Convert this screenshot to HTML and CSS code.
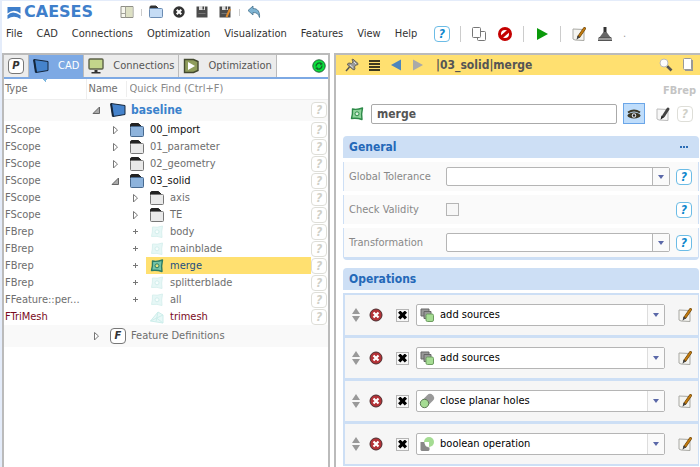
FILE: index.html
```html
<!DOCTYPE html>
<html lang="en">
<head>
    <meta charset="UTF-8">
    <meta name="viewport" content="width=device-width, initial-scale=1.0">
    <title>CAESES</title>
    <link rel="stylesheet" href="styles.css">
</head>
<body>
    <!-- icon sprite -->
    <svg class="sprite">
        <symbol id="i-layout" viewBox="0 0 16 16">
            <path d="M2 2.500h12v11H2z" fill="#f7f7ee" stroke="#8f8f86"/>
            <path d="M7 3h6.500v10H7z" fill="#dde0c4"/>
            <path d="M6.500 2.500v11M2 9.500h4.500" stroke="#a3a398" fill="none"/>
        </symbol>
        <symbol id="i-open" viewBox="0 0 16 16">
            <path d="M2 5V3q0-1 1-1h5l2 2" fill="#333" stroke="#333"/>
            <rect x="1.500" y="4.500" width="13" height="9" rx="1" fill="#c5dcf5" stroke="#6b8cb3"/>
        </symbol>
        <symbol id="i-close" viewBox="0 0 16 16">
            <circle cx="8" cy="8" r="5.700" fill="#333"/>
            <path d="M5.700 5.700l4.600 4.600M10.300 5.700l-4.600 4.600" stroke="#fff" stroke-width="2"/>
        </symbol>
        <symbol id="i-save" viewBox="0 0 16 16">
            <path d="M2.500 2.500h11v11h-11z" fill="#4c4c4c"/>
            <path d="M5 2h6v4H5z" fill="#ddd"/>
            <path d="M8.500 2.500h1.500v3H8.500z" fill="#444"/>
            <path d="M4.500 9h7v1h-7z" fill="#777"/>
        </symbol>
        <symbol id="i-undo" viewBox="0 0 16 16">
            <path d="M2 6.500L7 2v2.500c5 0 7 3.500 6.500 9C12.500 10 11 8.500 7 8.500V11z" fill="#7fb4d3" stroke="#44708c" stroke-width=".8"/>
        </symbol>
        <symbol id="i-copy" viewBox="0 0 16 16">
            <rect x="6.500" y="5.500" width="8" height="9" rx="1" fill="#fff" stroke="#777"/>
            <rect x="1.500" y="1.500" width="8" height="10" rx="1" fill="#fff" stroke="#777"/>
        </symbol>
        <symbol id="i-stop" viewBox="0 0 16 16">
            <circle cx="8" cy="8" r="5.500" fill="#fff" stroke="#c40000" stroke-width="3"/>
            <path d="M4 11.500L12 4.500" stroke="#c40000" stroke-width="3"/>
        </symbol>
        <symbol id="i-play" viewBox="0 0 16 16">
            <path d="M3 2l11 6-11 6z" fill="#0a9a0a"/>
        </symbol>
        <symbol id="i-edit" viewBox="0 0 16 16">
            <path d="M2 3l11 .5v11l-9-.5-2-1z" fill="#f4f4f0" stroke="#a9a9a4"/>
            <path d="M13.500 2.500L8 10.500" stroke="#5f3a00" stroke-width="3" stroke-linecap="round"/>
            <path d="M13.500 2.500L8.500 9.800" stroke="#c07a10" stroke-width="2" stroke-linecap="round"/>
            <path d="M6.500 9.500l2.500 1.800-3.500 2.500z" fill="#444"/>
        </symbol>
        <symbol id="i-note" viewBox="0 0 16 16">
            <path d="M2 3l11 .5v11l-9-.5-2-1z" fill="#f7f7f7" stroke="#bbb"/>
            <path d="M13 3L8.500 10" stroke="#444" stroke-width="3" stroke-linecap="round"/>
            <path d="M6.500 9.500l2.500 1.800-3.500 2.500z" fill="#222"/>
        </symbol>
        <symbol id="i-broom" viewBox="0 0 16 16">
            <path d="M6.500 1h3v7h-3z" fill="#333"/>
            <path d="M6.500 6h3l4.500 6H2z" fill="#666"/>
            <path d="M1 11.500h14v3H1z" fill="#999"/>
            <path d="M1 14.500h14M2 11.500h12" stroke="#555"/>
        </symbol>
        <symbol id="i-cad" viewBox="0 0 16 16">
            <path d="M1 1.500l14 2v9l-12 2z" fill="#4583cc" stroke="#14263c" stroke-linejoin="round"/>
            <path d="M1 1.500l2 13" stroke="#14263c" stroke-width="2"/>
        </symbol>
        <symbol id="i-monitor" viewBox="0 0 16 16">
            <rect x="1" y="1" width="14" height="10" rx="1" fill="#c3d68b" stroke="#5c6148" stroke-width="1.400"/>
            <path d="M6.500 12h3v2h-3zM3.500 14h9v1.500h-9z" fill="#333"/>
        </symbol>
        <symbol id="i-optim" viewBox="0 0 16 16">
            <path d="M1.500 1.500h9L15 3.500v9l-4.500 2h-9z" fill="#8f9d5c" stroke="#43492f" stroke-width="1.400"/>
            <path d="M5 4l7 4-7 4z" fill="#fff"/>
        </symbol>
        <symbol id="i-refresh" viewBox="0 0 16 16">
            <circle cx="8" cy="8" r="6.200" fill="#0ae03c" stroke="#24623a"/>
            <path d="M5 8.500c0-3 3-4.500 5-3M11 7.500c0 3-3 4.500-5 3" fill="none" stroke="#11662a" stroke-width="1.300"/>
            <path d="M9.500 4l2.500 2-3 1.500zM6.500 9l-2.500 1 3 2z" fill="#11662a"/>
        </symbol>
        <symbol id="i-folder" viewBox="0 0 16 16">
            <path d="M1.500 5V3q0-1.500 1.500-1.500h6.500L12 4" fill="#222" stroke="#222"/>
            <rect x="1.500" y="4.500" width="13" height="10" rx="1" fill="#e9e9e9" stroke="#777"/>
        </symbol>
        <symbol id="i-folder-blue" viewBox="0 0 16 16">
            <path d="M1.500 5V3q0-1.500 1.500-1.500h6.500L12 4" fill="#222" stroke="#222"/>
            <rect x="1.500" y="4.500" width="13" height="10" rx="1" fill="#8db3dc" stroke="#47698f"/>
        </symbol>
        <symbol id="i-right" viewBox="0 0 16 16">
            <path d="M6.500 4.500L10.500 8l-4 4z" fill="#fff" stroke="#777"/>
        </symbol>
        <symbol id="i-down" viewBox="0 0 16 16">
            <path d="M11.500 5v6.500H5z" fill="#aaa" stroke="#666"/>
        </symbol>
        <symbol id="i-plus" viewBox="0 0 16 16">
            <path d="M6 7.500h5M8.500 5v5" stroke="#777"/>
        </symbol>
        <symbol id="i-brep" viewBox="0 0 16 16">
            <path d="M3.500 3Q8 4 13.500 2Q12 8 13 13.500Q8 11.700 2.500 12.500Q3.800 8 3.500 3z" fill="#8ed49a" stroke="#2d8a48" stroke-width="1.400" stroke-linejoin="round"/>
            <circle cx="8" cy="7.800" r="2" fill="#d8f2da" stroke="#2d8a48"/>
        </symbol>
        <symbol id="i-brep-teal" viewBox="0 0 16 16">
            <path d="M3.500 3Q8 4 13.500 2Q12 8 13 13.500Q8 11.700 2.500 12.500Q3.800 8 3.500 3z" fill="#74c4a8" stroke="#2a7c66" stroke-width="1.400" stroke-linejoin="round"/>
            <circle cx="8" cy="7.800" r="2" fill="#e4e27c" stroke="#2a7c66"/>
        </symbol>
        <symbol id="i-brep-off" viewBox="0 0 16 16">
            <path d="M3.500 3Q8 4 13.500 2Q12 8 13 13.500Q8 11.700 2.500 12.500Q3.800 8 3.500 3z" fill="#e6f7f6" stroke="#d9f1ef" stroke-linejoin="round"/>
            <circle cx="8" cy="7.800" r="2" fill="#f6fdfc" stroke="#d3efed"/>
        </symbol>
        <symbol id="i-mesh" viewBox="0 0 16 16">
            <path d="M1.500 12L9 3l5 3v8zM1.500 12L14 6M9 3l-2 9.500M14 14L7.500 9" fill="#e8f8f7" stroke="#cdeeeb"/>
        </symbol>
        <symbol id="i-pin" viewBox="0 0 16 16">
            <path d="M8 2.500Q9 1.500 10 3l4 3.500q.5 1.500-1.500 1.500L10.500 9.500 11 12q-.5 1.500-2 .5L3.500 8Q3 6.500 5 6l2.500.5L9 5z" fill="#999" stroke="#6d6654"/>
            <path d="M5.500 10L2 14" stroke="#555" stroke-width="1.500"/>
            <path d="M6 8l3 2.500M10 5l2 2" stroke="#e4e4e4"/>
        </symbol>
        <symbol id="i-list" viewBox="0 0 16 16">
            <path d="M3 4h11M3 7h11M3 10h11M3 13h11" stroke="#3d3a20" stroke-width="2"/>
        </symbol>
        <symbol id="i-back" viewBox="0 0 16 16">
            <path d="M13 2.500v11L3 8z" fill="#4d86bd"/>
        </symbol>
        <symbol id="i-next" viewBox="0 0 16 16">
            <path d="M3 2.500v11L13 8z" fill="#a9a9a9"/>
        </symbol>
        <symbol id="i-search" viewBox="0 0 16 16">
            <path d="M9 9l4.500 4.500" stroke="#555" stroke-width="2.600"/>
            <circle cx="6" cy="6" r="4" fill="#fdfdfd" stroke="#bbb"/>
        </symbol>
        <symbol id="i-page" viewBox="0 0 16 16">
            <path d="M5 3h8v11H5z" fill="#999"/>
            <rect x="3.500" y="1.500" width="8" height="11" rx="1" fill="#fff" stroke="#999"/>
        </symbol>
        <symbol id="i-eye" viewBox="0 0 16 16">
            <path d="M2 6.500q6-4 12 0" fill="none" stroke="#3c3826" stroke-width="2"/>
            <ellipse cx="8" cy="9.500" rx="6.500" ry="3" fill="#3c3826"/>
            <circle cx="8" cy="9.500" r="2.200" fill="#e8eef4"/>
            <circle cx="8" cy="9.500" r="1.200" fill="#222"/>
        </symbol>
        <symbol id="i-sort" viewBox="0 0 16 16">
            <path d="M8 1l4 6H4zM8 15l4-6H4z" fill="#999"/>
        </symbol>
        <symbol id="i-delete" viewBox="0 0 16 16">
            <circle cx="8" cy="8" r="6" fill="#b33237" stroke="#4a2c2e"/>
            <path d="M5.500 5.500l5 5M10.500 5.500l-5 5" stroke="#fff" stroke-width="2.200"/>
        </symbol>
        <symbol id="i-add" viewBox="0 0 16 16">
            <path d="M2 2h8v7H2z" fill="#999" stroke="#666"/>
            <path d="M5 4.500h7v7H5z" fill="#999" stroke="#666"/>
            <rect x="7" y="7" width="7.500" height="7.500" rx="1.500" fill="#a5dc93" stroke="#6d9c60"/>
        </symbol>
        <symbol id="i-holes" viewBox="0 0 16 16">
            <path d="M6 10l5-5" stroke="#999" stroke-width="8" stroke-linecap="round"/>
            <circle cx="5.500" cy="10.500" r="4.200" fill="#a5dc93" stroke="#5d7a55"/>
        </symbol>
        <symbol id="i-bool" viewBox="0 0 16 16">
            <circle cx="10" cy="6" r="5" fill="#a5dc93"/>
            <path d="M1.500 6h4q0 5 5 5.500V14l-1 1h-7l-1-1z" fill="#888"/>
            <path d="M5.500 6H10v5q-4.500-.5-4.500-5z" fill="#fff"/>
        </symbol>
        <symbol id="i-caret" viewBox="0 0 16 16">
            <path d="M5 6h6l-3 4z" fill="#5a68a8"/>
        </symbol>
        <symbol id="i-dots" viewBox="0 0 16 16">
            <path d="M4 7h2v2H4zM7 7h2v2H7zM10 7h2v2h-2z" fill="#2b6cb5"/>
        </symbol>
    </svg>

    <header>
        <div class="toolbar">
            <a class="logo" href="#">
                <svg viewBox="0 0 14 14"><path d="M0 1h14v7Q7 2 0 8z" fill="#3f7fcb"/><path d="M0 10Q5 4 14 10v4Q7 9 0 14z" fill="#3f7fcb"/></svg>
                <span>CAESES</span>
            </a>
            <button class="icon" aria-label="Layout"><svg><use href="#i-layout"/></svg></button>
            <i class="sep"></i>
            <button class="icon" aria-label="Open"><svg><use href="#i-open"/></svg></button>
            <button class="icon" aria-label="Close"><svg><use href="#i-close"/></svg></button>
            <button class="icon" aria-label="Save"><svg><use href="#i-save"/></svg></button>
            <button class="icon" aria-label="Save as"><svg viewBox="0 0 16 16"><use href="#i-save"/><path d="M13 5L9.500 13" stroke="#e08a2c" stroke-width="2"/></svg></button>
            <i class="sep"></i>
            <button class="icon" aria-label="Undo"><svg><use href="#i-undo"/></svg></button>
        </div>
        <div class="menubar">
            <nav>
                <a href="#">File</a>
                <a href="#">CAD</a>
                <a href="#">Connections</a>
                <a href="#">Optimization</a>
                <a href="#">Visualization</a>
                <a href="#">Features</a>
                <a href="#">View</a>
                <a href="#">Help</a>
            </nav>
            <button class="help">?</button>
            <i class="sep"></i>
            <button class="icon" aria-label="Copy"><svg><use href="#i-copy"/></svg></button>
            <button class="icon" aria-label="Stop"><svg><use href="#i-stop"/></svg></button>
            <i class="sep"></i>
            <button class="icon" aria-label="Run"><svg><use href="#i-play"/></svg></button>
            <i class="sep"></i>
            <button class="icon" aria-label="Edit"><svg><use href="#i-edit"/></svg></button>
            <button class="icon" aria-label="Clean"><svg><use href="#i-broom"/></svg></button>
            <span class="more">.</span>
        </div>
    </header>

    <main>
        <!-- object tree -->
        <section class="panel left">
            <div class="tabs">
                <button class="tab"><span class="letter">P</span></button>
                <button class="tab active"><svg><use href="#i-cad"/></svg>CAD</button>
                <button class="tab"><svg><use href="#i-monitor"/></svg>Connections</button>
                <button class="tab"><svg><use href="#i-optim"/></svg>Optimization</button>
                <button class="icon refresh" aria-label="Refresh"><svg><use href="#i-refresh"/></svg></button>
            </div>
            <table class="tree">
                <colgroup>
                    <col class="col-type">
                    <col>
                    <col class="col-help">
                </colgroup>
                <thead>
                    <tr>
                        <th class="type">Type</th>
                        <th colspan="2"><div class="find"><label for="find">Name</label><input id="find" type="text" placeholder="Quick Find (Ctrl+F)"></div></th>
                    </tr>
                </thead>
                <tbody>
                    <tr class="root">
                        <td></td>
                        <td><div class="node"><svg><use href="#i-down"/></svg><span class="item"><svg><use href="#i-cad"/></svg><b>baseline</b></span></div></td>
                        <td><button class="help off">?</button></td>
                    </tr>
                    <tr class="dark">
                        <td>FScope</td>
                        <td><div class="node l1"><svg><use href="#i-right"/></svg><span class="item"><svg><use href="#i-folder-blue"/></svg>00_import</span></div></td>
                        <td><button class="help off">?</button></td>
                    </tr>
                    <tr>
                        <td>FScope</td>
                        <td><div class="node l1"><svg><use href="#i-right"/></svg><span class="item"><svg><use href="#i-folder"/></svg>01_parameter</span></div></td>
                        <td><button class="help off">?</button></td>
                    </tr>
                    <tr>
                        <td>FScope</td>
                        <td><div class="node l1"><svg><use href="#i-right"/></svg><span class="item"><svg><use href="#i-folder"/></svg>02_geometry</span></div></td>
                        <td><button class="help off">?</button></td>
                    </tr>
                    <tr class="dark">
                        <td>FScope</td>
                        <td><div class="node l1"><svg><use href="#i-down"/></svg><span class="item"><svg><use href="#i-folder-blue"/></svg>03_solid</span></div></td>
                        <td><button class="help off">?</button></td>
                    </tr>
                    <tr>
                        <td>FScope</td>
                        <td><div class="node l2"><svg><use href="#i-right"/></svg><span class="item"><svg><use href="#i-folder"/></svg>axis</span></div></td>
                        <td><button class="help off">?</button></td>
                    </tr>
                    <tr>
                        <td>FScope</td>
                        <td><div class="node l2"><svg><use href="#i-right"/></svg><span class="item"><svg><use href="#i-folder"/></svg>TE</span></div></td>
                        <td><button class="help off">?</button></td>
                    </tr>
                    <tr>
                        <td>FBrep</td>
                        <td><div class="node l2"><svg><use href="#i-plus"/></svg><span class="item"><svg><use href="#i-brep-off"/></svg>body</span></div></td>
                        <td><button class="help off">?</button></td>
                    </tr>
                    <tr>
                        <td>FBrep</td>
                        <td><div class="node l2"><svg><use href="#i-plus"/></svg><span class="item"><svg><use href="#i-brep-off"/></svg>mainblade</span></div></td>
                        <td><button class="help off">?</button></td>
                    </tr>
                    <tr class="selected">
                        <td>FBrep</td>
                        <td><div class="node l2"><svg><use href="#i-plus"/></svg><span class="item"><svg><use href="#i-brep-teal"/></svg>merge</span></div></td>
                        <td><button class="help off">?</button></td>
                    </tr>
                    <tr>
                        <td>FBrep</td>
                        <td><div class="node l2"><svg><use href="#i-plus"/></svg><span class="item"><svg><use href="#i-brep-off"/></svg>splitterblade</span></div></td>
                        <td><button class="help off">?</button></td>
                    </tr>
                    <tr>
                        <td>FFeature::per...</td>
                        <td><div class="node l2"><svg><use href="#i-plus"/></svg><span class="item"><svg><use href="#i-brep-off"/></svg>all</span></div></td>
                        <td><button class="help off">?</button></td>
                    </tr>
                    <tr class="error">
                        <td>FTriMesh</td>
                        <td><div class="node l2"><svg></svg><span class="item"><svg><use href="#i-mesh"/></svg>trimesh</span></div></td>
                        <td><button class="help off">?</button></td>
                    </tr>
                    <tr class="root">
                        <td></td>
                        <td colspan="2"><div class="node"><svg><use href="#i-right"/></svg><span class="item"><span class="letter">F</span>Feature Definitions</span></div></td>
                    </tr>
                </tbody>
            </table>
        </section>

        <!-- object editor -->
        <section class="panel right">
            <div class="crumbs">
                <button class="icon" aria-label="Pin"><svg><use href="#i-pin"/></svg></button>
                <button class="icon" aria-label="List"><svg><use href="#i-list"/></svg></button>
                <button class="icon" aria-label="Back"><svg><use href="#i-back"/></svg></button>
                <button class="icon" aria-label="Forward"><svg><use href="#i-next"/></svg></button>
                <b>|03_solid|merge</b>
                <button class="icon" aria-label="Search"><svg><use href="#i-search"/></svg></button>
                <button class="icon" aria-label="Duplicate"><svg><use href="#i-page"/></svg></button>
            </div>
            <div class="class-name">FBrep</div>
            <div class="name-row">
                <svg><use href="#i-brep"/></svg>
                <input type="text" value="merge" aria-label="Name">
                <button class="eye" aria-label="Visible"><svg><use href="#i-eye"/></svg></button>
                <button class="icon" aria-label="Note"><svg><use href="#i-note"/></svg></button>
                <button class="help off">?</button>
            </div>

            <div class="group">
                <h2>General<button class="icon" aria-label="More"><svg><use href="#i-dots"/></svg></button></h2>
                <div class="fields">
                    <div class="field">
                        <label for="tol">Global Tolerance</label>
                        <div class="combo"><select id="tol"><option></option></select><span class="arrow"><svg><use href="#i-caret"/></svg></span></div>
                        <button class="help">?</button>
                    </div>
                    <div class="field">
                        <label for="valid">Check Validity</label>
                        <div class="fill"><input id="valid" type="checkbox"></div>
                        <button class="help">?</button>
                    </div>
                    <div class="field">
                        <label for="trans">Transformation</label>
                        <div class="combo"><select id="trans"><option></option></select><span class="arrow"><svg><use href="#i-caret"/></svg></span></div>
                        <button class="help">?</button>
                    </div>
                </div>
            </div>

            <div class="group">
                <h2>Operations</h2>
                <div class="ops">
                    <div class="op">
                        <button class="icon" aria-label="Move"><svg><use href="#i-sort"/></svg></button>
                        <button class="icon" aria-label="Delete"><svg><use href="#i-delete"/></svg></button>
                        <input type="checkbox" checked aria-label="Active">
                        <div class="combo"><svg><use href="#i-add"/></svg><select aria-label="Operation"><option>add sources</option></select><span class="arrow"><svg><use href="#i-caret"/></svg></span></div>
                        <button class="icon" aria-label="Edit"><svg><use href="#i-edit"/></svg></button>
                    </div>
                    <div class="op">
                        <button class="icon" aria-label="Move"><svg><use href="#i-sort"/></svg></button>
                        <button class="icon" aria-label="Delete"><svg><use href="#i-delete"/></svg></button>
                        <input type="checkbox" checked aria-label="Active">
                        <div class="combo"><svg><use href="#i-add"/></svg><select aria-label="Operation"><option>add sources</option></select><span class="arrow"><svg><use href="#i-caret"/></svg></span></div>
                        <button class="icon" aria-label="Edit"><svg><use href="#i-edit"/></svg></button>
                    </div>
                    <div class="op">
                        <button class="icon" aria-label="Move"><svg><use href="#i-sort"/></svg></button>
                        <button class="icon" aria-label="Delete"><svg><use href="#i-delete"/></svg></button>
                        <input type="checkbox" checked aria-label="Active">
                        <div class="combo"><svg><use href="#i-holes"/></svg><select aria-label="Operation"><option>close planar holes</option></select><span class="arrow"><svg><use href="#i-caret"/></svg></span></div>
                        <button class="icon" aria-label="Edit"><svg><use href="#i-edit"/></svg></button>
                    </div>
                    <div class="op">
                        <button class="icon" aria-label="Move"><svg><use href="#i-sort"/></svg></button>
                        <button class="icon" aria-label="Delete"><svg><use href="#i-delete"/></svg></button>
                        <input type="checkbox" checked aria-label="Active">
                        <div class="combo"><svg><use href="#i-bool"/></svg><select aria-label="Operation"><option>boolean operation</option></select><span class="arrow"><svg><use href="#i-caret"/></svg></span></div>
                        <button class="icon" aria-label="Edit"><svg><use href="#i-edit"/></svg></button>
                    </div>
                </div>
            </div>
        </section>
    </main>
</body>
</html>
```
FILE: styles.css
```css
* {
    margin: 0;
    padding: 0;
    box-sizing: border-box;
}
body {
    display: flex;
    flex-direction: column;
    height: 100vh;
    overflow: hidden;
    border-top: 1px solid #e4ecfa;
    border-left: 2px solid #e4ecfa;
    background-color: #fff;
    color: #333;
    font: 11px/16px Tahoma, "DejaVu Sans Condensed", "Noto Sans", sans-serif;
}
button, input, select {
    font: inherit;
    color: inherit;
    border: 0;
    background: none;
}
a {
    color: inherit;
    text-decoration: none;
}
svg {
    display: block;
    flex: none;
    width: 16px;
    height: 16px;
}
.sprite {
    position: absolute;
    width: 0;
    height: 0;
}
.icon {
    flex: none;
    width: 16px;
    height: 16px;
}
.sep {
    width: 1px;
    height: 16px;
    background-color: #ccc;
}
.help {
    display: block;
    flex: none;
    width: 16px;
    height: 16px;
    border: 1px solid #6cbce6;
    border-radius: 4px;
    background-color: #fff;
    color: #0d86cc;
    font-size: 12px;
    font-weight: bold;
    font-style: italic;
    line-height: 14px;
    text-align: center;
}
.help.off {
    border-color: #deded8;
    color: #d0d0c8;
}
.letter {
    flex: none;
    width: 16px;
    height: 16px;
    border: 1px solid #777;
    border-radius: 4px;
    background-color: #fff;
    color: #333;
    font-weight: bold;
    font-style: italic;
    line-height: 14px;
    text-align: center;
}

/* header */
.toolbar {
    display: flex;
    align-items: center;
    gap: 7px;
    height: 22px;
    padding-left: 5px;
}
.toolbar .sep {
    height: 7px;
    margin: 0 -1px;
}
.logo {
    display: flex;
    align-items: center;
    gap: 3px;
    width: 105px;
    color: #3f7fcb;
    font: bold 16px/16px "DejaVu Sans", sans-serif;
}
.logo svg {
    width: 14px;
    height: 13px;
}
.menubar {
    display: flex;
    align-items: center;
    gap: 10px;
    height: 22px;
    padding-left: 4px;
}
.menubar nav {
    display: flex;
    gap: 14px;
    width: 418px;
}
.menubar .more {
    color: #999;
}

main {
    display: flex;
    flex: 1;
    gap: 4px;
    min-height: 0;
    padding-top: 8px;
}
.panel {
    border: 2px solid #bbb;
    border-bottom: 0;
    overflow: hidden;
}

/* left */
.left {
    width: 47%;
    flex: none;
}
.tabs {
    display: flex;
    height: 24px;
    border-bottom: 2px solid #7da9e4;
}
.tab {
    display: flex;
    align-items: center;
    gap: 9px;
    padding: 0 4px;
    border-right: 1px solid #bbb;
    background-color: #ececec;
    color: #555;
}
.tab.active {
    background-color: #7da9e4;
    color: #fff;
}
.refresh {
    margin: 3px 1px 0 auto;
}
.tree {
    width: 100%;
    border-collapse: collapse;
    table-layout: fixed;
    color: #6e6e6e;
}
.col-type {
    width: 82px;
}
.col-help {
    width: 17px;
}
.tree th {
    height: 20px;
    border-bottom: 1px solid #eee;
    font-weight: normal;
    text-align: left;
}
/* sort marker above the title */
.tree .type {
    padding-left: 1px;
    border-right: 1px solid #eee;
    background: conic-gradient(from -45deg at 50% 100%, #7fb8e0 90deg, transparent 0) 38px 0 / 6px 3px no-repeat;
}
.find {
    display: flex;
}
.find label {
    width: 40px;
    padding-left: 2px;
    border-right: 1px solid #eee;
}
.find input {
    flex: 1;
    min-width: 0;
    padding-left: 3px;
}
.find input::placeholder {
    color: #888;
}
.tree td {
    height: 17px;
    white-space: nowrap;
}
.tree td:first-child {
    padding-left: 1px;
}
.tree .root td {
    height: 22px;
    background-color: #f9f9f9;
}
.root b {
    color: #3b82cc;
    font-size: 12px;
}
.node {
    display: flex;
    align-items: center;
    padding-left: 2px;
}
.node.l1 {
    padding-left: 21px;
}
.node.l2 {
    padding-left: 41px;
}
.item {
    display: flex;
    align-items: center;
    flex: 1;
    gap: 5px;
    height: 17px;
    margin-left: 3px;
    padding-left: 3px;
}
.dark .item {
    color: #111;
}
.selected .item {
    background-color: #ffe070;
    color: #1c4e80;
}
.error td {
    color: #7a0a1c;
}

/* right */
.right {
    flex: 1;
    min-width: 0;
    border-right: 0;
}
.crumbs {
    display: flex;
    align-items: center;
    gap: 6px;
    height: 20px;
    padding: 0 4px 0 8px;
    background-color: #ffe070;
    color: #555;
    font-size: 12px;
}
.crumbs b {
    flex: 1;
    padding-left: 4px;
}
.class-name {
    padding: 8px 4px 4px;
    color: #c4c4c4;
    font-weight: bold;
    text-align: right;
}
.name-row {
    display: flex;
    align-items: center;
    gap: 6px;
    padding: 0 7px 0 13px;
}
.name-row input {
    flex: 1;
    min-width: 0;
    height: 20px;
    padding: 0 5px;
    border: 1px solid #aaa;
    border-radius: 2px;
    color: #555;
    font-size: 12px;
    font-weight: bold;
}
.eye {
    display: flex;
    align-items: center;
    justify-content: center;
    width: 22px;
    height: 21px;
    margin-right: 4px;
    border: 1px solid #6ba6e8;
    background-color: #bfddfb;
}
.group {
    margin: 12px 1px 8px 7px;
}
.group + .group {
    margin-top: 0;
}
.group h2 {
    display: flex;
    justify-content: space-between;
    align-items: center;
    height: 22px;
    padding: 0 7px 0 6px;
    border-radius: 4px 4px 0 0;
    background-color: #cddff5;
    color: #2468b8;
    font-size: 12px;
}
.fields {
    border-bottom: 3px solid #cddff5;
    border-radius: 0 0 4px 4px;
}
.field {
    display: flex;
    align-items: center;
    gap: 6px;
    height: 29px;
    margin-top: 4px;
    padding: 0 6px 0 5px;
    border: solid #cddff5;
    border-width: 0 1px;
    background-color: #fafafa;
    color: #888;
}
.field label {
    width: 91px;
    white-space: nowrap;
}
.fill {
    flex: 1;
}
.combo {
    display: flex;
    align-items: center;
    flex: 1;
    min-width: 0;
    height: 19px;
    border: 1px solid #b5b5b5;
    border-radius: 2px;
    background-color: #fff;
}
.combo select {
    flex: 1;
    min-width: 0;
    appearance: none;
}
.arrow {
    display: flex;
    align-items: center;
    align-self: stretch;
    border-left: 1px solid #b5b5b5;
    background-color: #fafafa;
}
input[type="checkbox"] {
    display: grid;
    place-content: center;
    appearance: none;
    width: 13px;
    height: 13px;
    border: 1px solid #b5b5b5;
    background-color: #f7f7f7;
}
/* thick cross instead of the tick */
input[type="checkbox"]:checked::before {
    content: '';
    width: 9px;
    height: 9px;
    background-color: #000;
    clip-path: polygon(25% 0, 50% 25%, 75% 0, 100% 25%, 75% 50%, 100% 75%, 75% 100%, 50% 75%, 25% 100%, 0 75%, 25% 50%, 0 25%);
}
.ops {
    margin-top: 3px;
    border: 2px solid #cddff5;
    border-right-width: 1px;
}
.op {
    display: flex;
    align-items: center;
    gap: 4px;
    height: 40px;
    padding: 0 5px 0 3px;
    background-color: #f6f6f6;
    color: #000;
}
.op + .op {
    height: 43px;
    border-top: 3px solid #cddff5;
}
.op input {
    margin: 0 3px 0 8px;
}
.op .combo {
    height: 22px;
    padding-left: 2px;
    margin-right: 8px;
}
.op .combo select {
    padding-left: 5px;
}
.op .arrow {
    border-color: #ddd;
}
```
